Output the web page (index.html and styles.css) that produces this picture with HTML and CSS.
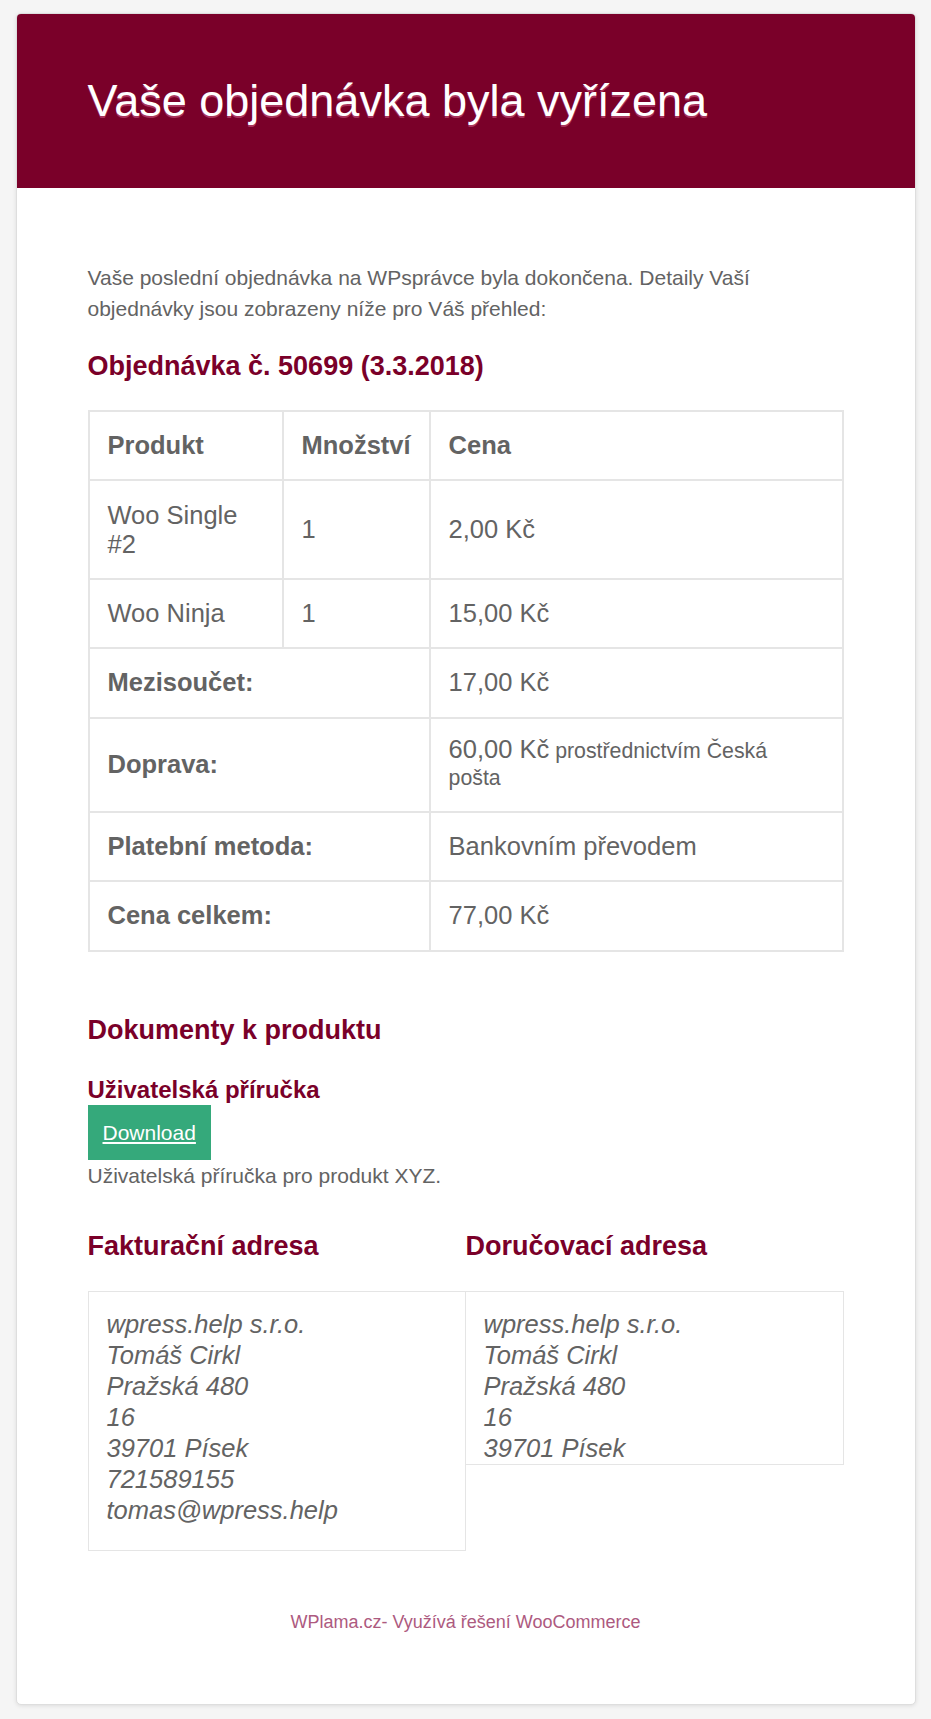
FILE: index.html
```html
<!DOCTYPE html>
<html lang="cs">
<head>
<meta charset="utf-8">
<title>Vaše objednávka byla vyřízena</title>
<link rel="stylesheet" href="styles.css">
</head>
<body>
<div class="wrapper">
  <div class="email">
    <header class="email-header">
      <h1>Vaše objednávka byla vyřízena</h1>
    </header>
    <main class="email-body">
      <p class="intro">Vaše poslední objednávka na WPsprávce byla dokončena. Detaily Vaší objednávky jsou zobrazeny níže pro Váš přehled:</p>
      <h2 class="order-title">Objednávka č. 50699 (3.3.2018)</h2>
      <table class="order-table">
        <colgroup>
          <col class="c1"><col class="c2"><col class="c3">
        </colgroup>
        <thead>
          <tr><th>Produkt</th><th>Množství</th><th>Cena</th></tr>
        </thead>
        <tbody>
          <tr><td>Woo Single #2</td><td>1</td><td>2,00&nbsp;Kč</td></tr>
          <tr><td>Woo Ninja</td><td>1</td><td>15,00&nbsp;Kč</td></tr>
        </tbody>
        <tfoot>
          <tr><th colspan="2">Mezisoučet:</th><td>17,00&nbsp;Kč</td></tr>
          <tr><th colspan="2">Doprava:</th><td class="ship"><span class="amount">60,00&nbsp;Kč</span> <small class="via">prostřednictvím Česká pošta</small></td></tr>
          <tr><th colspan="2">Platební metoda:</th><td>Bankovním převodem</td></tr>
          <tr><th colspan="2">Cena celkem:</th><td>77,00&nbsp;Kč</td></tr>
        </tfoot>
      </table>

      <h2 class="docs-title">Dokumenty k produktu</h2>
      <h3 class="doc-name">Uživatelská příručka</h3>
      <a class="download" href="#">Download</a>
      <p class="doc-desc">Uživatelská příručka pro produkt XYZ.</p>

      <div class="addresses">
        <div class="addr-col">
          <h2 class="addr-title">Fakturační adresa</h2>
          <address class="addr addr-billing">wpress.help s.r.o.<br>Tomáš Cirkl<br>Pražská 480<br>16<br>39701 Písek<br>721589155<br>tomas@wpress.help</address>
        </div>
        <div class="addr-col">
          <h2 class="addr-title">Doručovací adresa</h2>
          <address class="addr addr-shipping">wpress.help s.r.o.<br>Tomáš Cirkl<br>Pražská 480<br>16<br>39701 Písek</address>
        </div>
      </div>
    </main>
    <footer class="email-footer">
      <p>WPlama.cz- Využívá řešení WooCommerce</p>
    </footer>
  </div>
</div>
</body>
</html>
```
FILE: styles.css
```css
html, body {
  margin: 0;
  padding: 0;
}
body {
  background: #f5f5f5;
  font-family: "Liberation Sans", Arial, Helvetica, sans-serif;
  color: #636363;
}
.wrapper {
  padding: 13px 0 13px;
}
.email {
  width: 898px;
  margin: 0 auto;
  background: #ffffff;
  border: 1px solid #dedede;
  border-radius: 5px;
  box-shadow: 0 1px 4px rgba(0, 0, 0, 0.1);
  overflow: hidden;
}
.email-header {
  background: #7a0029;
  padding: 53px 71px 54px;
}
.email-header h1 {
  margin: 0;
  color: #ffffff;
  font-size: 45px;
  font-weight: 300;
  line-height: 67px;
  text-shadow: 0 1.5px 0 #a8335c;
}
.email-body {
  padding: 73.5px 71px 0;
}
.intro {
  margin: 0 0 24px;
  font-size: 21px;
  line-height: 31.5px;
}
h2 {
  color: #7a0029;
  font-size: 27px;
  font-weight: bold;
  line-height: 35px;
  margin: 0;
}
.order-title {
  margin-bottom: 26.5px;
}
.order-table {
  width: 756px;
  border-collapse: collapse;
  border: 2px solid #e5e5e5;
  font-size: 25.5px;
  color: #636363;
  margin-bottom: 61px;
}
.order-table col.c1 { width: 194px; }
.order-table col.c2 { width: 147px; }
.order-table th,
.order-table td {
  border: 2px solid #e5e5e5;
  padding: 19.2px 18px;
  text-align: left;
  vertical-align: middle;
  line-height: normal;
}
.order-table th {
  font-weight: bold;
}
.order-table td.ship {
  font-size: 21.3px;
  line-height: 27px;
}
.order-table .amount {
  font-size: 25.5px;
  line-height: 20px;
}
.order-table .via {
  font-size: 21.3px;
}
.docs-title {
  margin-bottom: 26px;
}
.doc-name {
  margin: 0;
  color: #7a0029;
  font-size: 24px;
  font-weight: bold;
  line-height: 31px;
}
.download {
  display: inline-block;
  background: #35a97b;
  color: #ffffff;
  font-size: 21px;
  line-height: 25px;
  padding: 15px 15px 15px;
  text-decoration: underline;
}
.doc-desc {
  margin: 0 0 37px;
  font-size: 21px;
  line-height: 32px;
}
.addresses {
  display: flex;
  align-items: flex-start;
}
.addr-col {
  width: 378px;
  flex: 0 0 378px;
}
.addr-title {
  margin-bottom: 27px;
}
.addr {
  border: 1px solid #e5e5e5;
  font-style: italic;
  font-size: 25.5px;
  line-height: 31px;
  padding: 17px 18px 0;
}
.addr-billing {
  padding-bottom: 24.5px;
}
.addr-shipping {
  border-left: none;
  padding-left: 18px;
  padding-bottom: 0;
}
.email-footer {
  padding: 58px 72px 68px;
  text-align: center;
}
.email-footer p {
  margin: 0;
  color: #ad5a80;
  font-size: 18px;
  line-height: 27px;
}
```
